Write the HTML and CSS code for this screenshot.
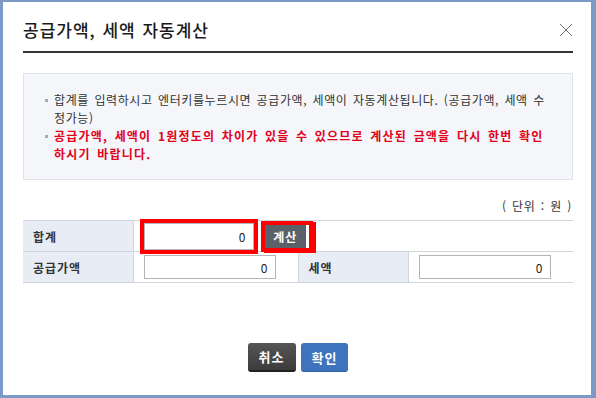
FILE: index.html
```html
<!DOCTYPE html>
<html lang="ko">
<head>
  <meta charset="UTF-8">
  <title>공급가액, 세액 자동계산</title>
  <link rel="stylesheet" href="styles.css">
</head>
<body>

<div class="dialog">
  <div class="head">
    <h1>공급가액, 세액 자동계산</h1>
    <button class="close" title="닫기">
      <svg width="14" height="14" viewBox="0 0 14 14"><path d="M1 1 L13 13 M13 1 L1 13" stroke="#777" stroke-width="1" fill="none"/></svg>
    </button>
  </div>

  <ul class="info">
    <li>합계를 입력하시고 엔터키를누르시면 공급가액, 세액이 자동계산됩니다. (공급가액, 세액 수정가능)</li>
    <li class="warn">공급가액, 세액이 1원정도의 차이가 있을 수 있으므로 계산된 금액을 다시 한번 확인 하시기 바랍니다.</li>
  </ul>

  <p class="unit">( 단위 : 원 )</p>

  <table class="calc">
    <colgroup>
      <col class="c-label"><col class="c-value"><col class="c-label"><col class="c-value">
    </colgroup>
    <tr class="row-sum">
      <th>합계</th>
      <td colspan="3">
        <input type="text" id="total" class="mark" value="0" onkeydown="if(event.key==='Enter')calc()">
        <button class="btn-calc" onclick="calc()">계산</button>
      </td>
    </tr>
    <tr>
      <th>공급가액</th>
      <td><input type="text" id="supply" value="0"></td>
      <th>세액</th>
      <td><input type="text" id="tax" value="0"></td>
    </tr>
  </table>

  <div class="actions">
    <button class="btn-cancel">취소</button>
    <button class="btn-ok">확인</button>
  </div>
</div>

<script>
function calc() {
  const total = parseInt(document.getElementById("total").value.replace(/,/g, "")) || 0;
  const supply = Math.round(total / 1.1);
  document.getElementById("supply").value = supply;
  document.getElementById("tax").value = total - supply;
}
</script>

</body>
</html>
```

FILE: styles.css
```css
html, body { margin: 0; padding: 0; background: #fff; }
body { font-family: "Noto Sans CJK KR", "Noto Sans", sans-serif; color: #333; }

.dialog { box-sizing: border-box; width: 596px; height: 398px; border: solid #7b9bc6; border-width: 2px 5px 3px 3px; padding: 0 18px 0 20px; background: #fff; }

.head { display: flex; justify-content: space-between; align-items: center; height: 51px; padding-top: 5px; box-sizing: border-box; border-bottom: 2px solid #333; }
.head h1 { margin: 0; font-size: 17px; font-weight: 500; color: #1a1a1a; letter-spacing: 1px; word-spacing: 1px; }
.close { border: none; background: none; padding: 0; margin: 2px 0 0; width: 14px; height: 14px; cursor: pointer; }
.close svg { display: block; }

.info { list-style: none; margin: 20px 0 0; padding: 17px 18px 16px 21px; background: #f4f6fa; border: 1px solid #dfe4ec; font-size: 12px; line-height: 18px; color: #333; letter-spacing: 0.6px; word-spacing: 1.5px; }
.info li { position: relative; padding-left: 9px; }
.info li::before { content: ""; position: absolute; left: 0; top: 8px; width: 3px; height: 3px; background: #aaa; }
.info .warn { color: #e3001b; font-weight: bold; letter-spacing: 1.2px; word-spacing: 2px; }

.unit { margin: 17px 1px 5px 0; text-align: right; font-size: 12px; line-height: 18px; color: #333; letter-spacing: 0.6px; word-spacing: 1.5px; }

.calc { width: 550px; border-collapse: collapse; table-layout: fixed; font-size: 12px; }
.c-label { width: 110px; }
.calc th, .calc td { border-top: 1px solid #cfd6df; border-bottom: 1px solid #cfd6df; height: 30px; padding: 0 0 0 10px; }
.calc th { background: #e8edf5; text-align: left; font-weight: bold; color: #333; border-right: 1px solid #cfd6df; letter-spacing: 1px; }
.calc td { padding-left: 10px; border-right: 1px solid #cfd6df; }
.calc td:last-child { border-right: none; }
.calc input { box-sizing: border-box; width: 132px; height: 24px; border: 1px solid #b5b5b5; padding: 0 7px; text-align: right; font-family: inherit; font-size: 12px; color: #222; vertical-align: middle; }
.calc input.mark { width: 110px; height: 27px; outline: 4px solid #f00; }

.btn-calc { box-sizing: border-box; height: 23px; width: 44px; margin-left: 8px; padding: 0; border: none; border-right: 3px solid #fff; background: #5b6169; color: #fff; font-family: inherit; font-size: 12px; font-weight: bold; letter-spacing: 1px; vertical-align: middle; cursor: pointer; box-shadow: 0 0 0 4px #f00, 3px 1px 0 4px #f00; }

.actions { display: flex; justify-content: center; gap: 5px; margin-top: 60px; }
.actions button { height: 29px; padding: 0 11px; border: none; border-radius: 3px; color: #fff; font-family: inherit; font-size: 13px; font-weight: bold; letter-spacing: 1px; cursor: pointer; }
.btn-cancel { background: linear-gradient(#555, #3c3c3c); border-bottom: 2px solid #222 !important; }
.btn-ok { background: #3d74bd; border-bottom: 1px solid #2f5f9d !important; }
```
